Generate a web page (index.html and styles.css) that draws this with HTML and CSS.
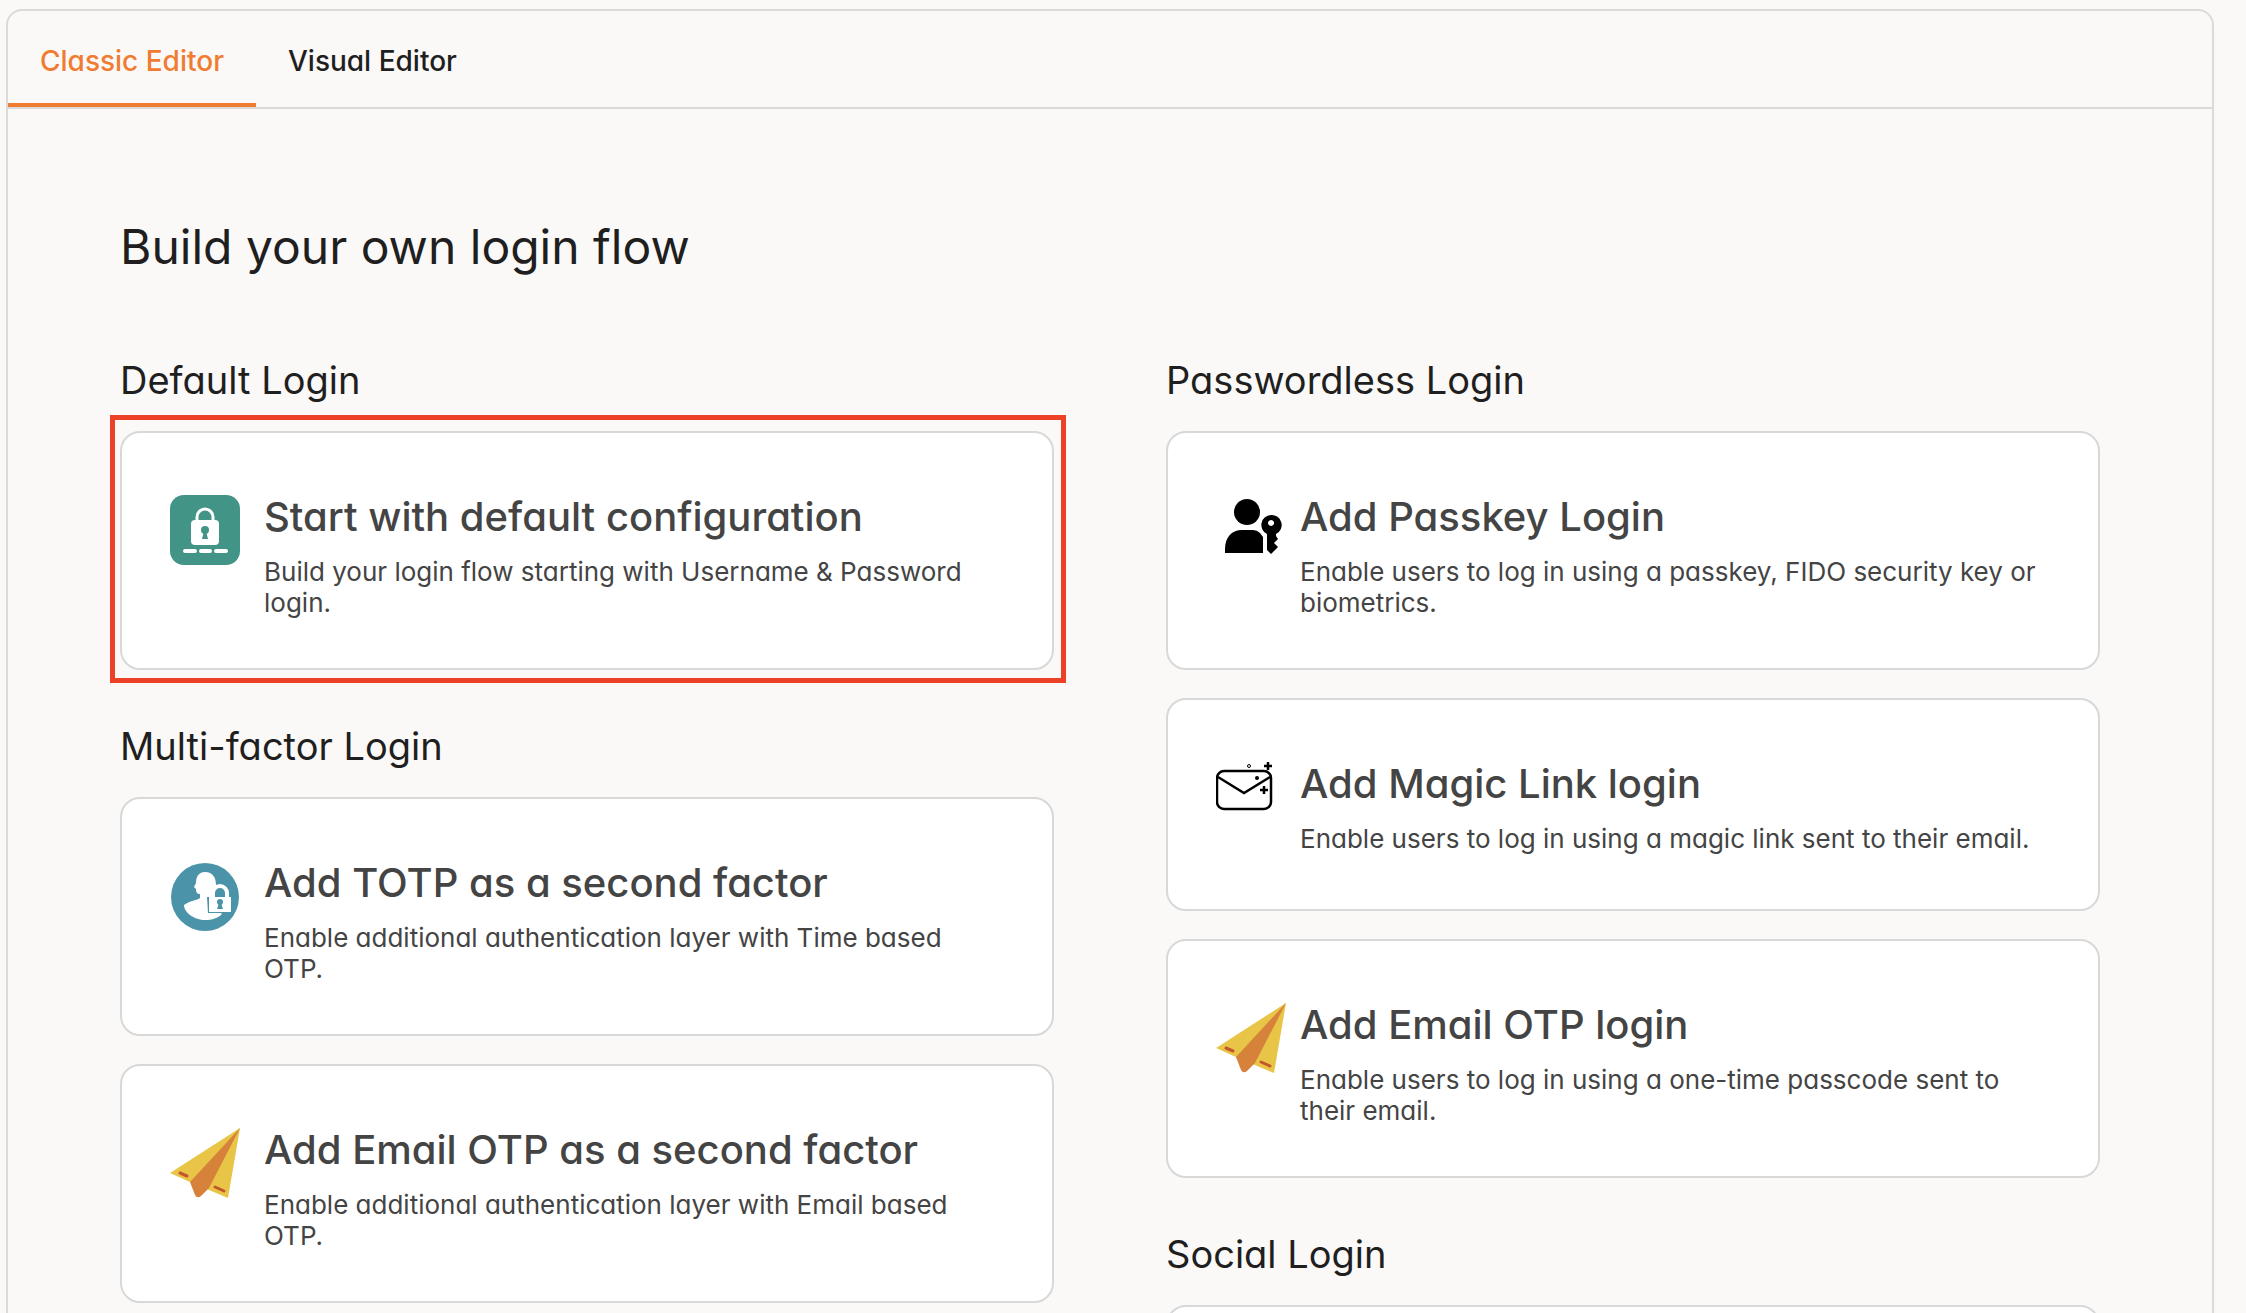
FILE: index.html
```html
<!DOCTYPE html>
<html lang="en">
<head>
<meta charset="utf-8">
<title>Login flow</title>
<link rel="stylesheet" href="styles.css">
</head>
<body>
<svg class="sprite" aria-hidden="true">
  <symbol id="plane" viewBox="0 0 70 70">
    <path d="M70 0 0 45 20 54 58 70Z" fill="#e8c547"/>
    <path d="M70 0 20 54 25 67 Q27 71 31 68L39 60Z" fill="#d6823b"/>
    <path d="M10 45 17 48M45 59 54 63" stroke="#c4562d" stroke-width="3" stroke-linecap="round"/>
  </symbol>
</svg>
<main class="panel">
  <nav class="tabs">
    <button class="tab tab-active" type="button">Classic Editor</button>
    <button class="tab" type="button">Visual Editor</button>
  </nav>
  <div class="content">
    <h1>Build your own login flow</h1>
    <div class="columns">
      <div class="column">
        <section>
          <h2>Default Login</h2>
          <div class="highlight">
            <button class="card" type="button">
              <svg class="icon" viewBox="0 0 70 70" aria-hidden="true">
                <rect width="70" height="70" rx="14" fill="#419486"/>
                <path d="M27 26V22a8 8 0 0 1 16 0v4" fill="none" stroke="#fff" stroke-width="3"/>
                <rect x="21" y="25" width="28" height="25" rx="4" fill="#fff"/>
                <circle cx="35" cy="35" r="4" fill="#419486"/>
                <path d="M34 36h2l2 8h-6Z" fill="#419486"/>
                <path d="M15 56H25M31 56H40M46 56H56" stroke="#fff" stroke-width="4" stroke-linecap="round"/>
              </svg>
              <span class="text">
                <span class="title">Start with default configuration</span>
                <span class="desc">Build your login flow starting with Username &amp; Password login.</span>
              </span>
            </button>
          </div>
        </section>
        <section>
          <h2>Multi-factor Login</h2>
          <div class="cards">
            <button class="card" type="button">
              <svg class="icon" viewBox="0 0 70 70" aria-hidden="true">
                <circle cx="35" cy="36" r="34" fill="#4b93a9"/>
                <path d="M35 11C43 11 46 17 46 24C46 30 44 34 41 38V44L52 53C48 57 42 59 35 59C25 59 14 52 14 44C19 40 28 39 30 37V33C27 33 26 31 26 28L24 26L26 22C26 15 29 11 35 11Z" fill="#fff"/>
                <path d="M37 36h5v-5a9 9 0 0 1 17 0v5h3v16H38Z" fill="#4b93a9"/>
                <path d="M43 37V32a7 7 0 0 1 14 0v5" fill="none" stroke="#fff" stroke-width="4"/>
                <path d="M39 36H61V51H39Z" fill="#fff"/>
                <circle cx="50" cy="41" r="3" fill="#4b93a9"/>
                <path d="M49 42h2l2 6h-6Z" fill="#4b93a9"/>
              </svg>
              <span class="text">
                <span class="title">Add TOTP as a second factor</span>
                <span class="desc">Enable additional authentication layer with Time based OTP.</span>
              </span>
            </button>
            <button class="card" type="button">
              <svg class="icon" aria-hidden="true"><use href="#plane"/></svg>
              <span class="text">
                <span class="title">Add Email OTP as a second factor</span>
                <span class="desc">Enable additional authentication layer with Email based OTP.</span>
              </span>
            </button>
          </div>
        </section>
      </div>
      <div class="column column-tight">
        <section>
          <h2>Passwordless Login</h2>
          <div class="cards">
            <button class="card" type="button">
              <svg class="icon" viewBox="0 0 70 70" aria-hidden="true">
                <circle cx="31" cy="17" r="13"/>
                <path d="M9 58V54C9 42 16 35 26 35H37Q41 35 44 38L47 42V58Z"/>
                <path fill-rule="evenodd" d="M55 20a10 10 0 0 1 5 19V41L62 44 58 48 62 52 55 59 51 55V39A10 10 0 0 1 55 20ZM55 25a3 3 0 1 0 .1 0Z"/>
              </svg>
              <span class="text">
                <span class="title">Add Passkey Login</span>
                <span class="desc">Enable users to log in using a passkey, FIDO security key or biometrics.</span>
              </span>
            </button>
            <button class="card" type="button">
              <svg class="icon" viewBox="0 0 70 70" fill="none" stroke="#000" stroke-width="2.500" aria-hidden="true">
                <rect x="1" y="9" width="54" height="38" rx="7"/>
                <path d="M2 15 28 31 54 15"/>
                <path d="M52 0V8M48 4H56M48 24V32M44 28H52"/>
                <circle cx="33" cy="4" r="1.500" stroke-width="1"/>
                <circle cx="41" cy="16" r="2" fill="#000" stroke="none"/>
              </svg>
              <span class="text">
                <span class="title">Add Magic Link login</span>
                <span class="desc">Enable users to log in using a magic link sent to their email.</span>
              </span>
            </button>
            <button class="card" type="button">
              <svg class="icon" aria-hidden="true"><use href="#plane"/></svg>
              <span class="text">
                <span class="title">Add Email OTP login</span>
                <span class="desc">Enable users to log in using a one-time passcode sent to their email.</span>
              </span>
            </button>
          </div>
        </section>
        <section>
          <h2>Social Login</h2>
          <div class="card"></div>
        </section>
      </div>
    </div>
  </div>
</main>
</body>
</html>
```
FILE: styles.css
```css
* {
  box-sizing: border-box;
}

body {
  margin: 0;
  height: 100vh;
  overflow: hidden;
  padding: 9px 32px 0 6px;
  background: #fbf9f8;
  color: #1f1f1f;
  font-family: Inter, "Liberation Sans", sans-serif;
  font-feature-settings: "cv11";
}

button {
  font: inherit;
  font-feature-settings: inherit;
  text-align: left;
  cursor: pointer;
}

.sprite {
  display: none;
}

.panel {
  border: 2px solid #dcdad9;
  border-radius: 16px;
}

.tabs {
  display: flex;
  border-bottom: 2px solid #dcdad9;
}

.tab {
  padding: 33px 32px 25px;
  border: 0;
  border-bottom: 4px solid transparent;
  background: none;
  color: #1f1f1f;
  font-size: 28px;
  font-weight: 500;
  line-height: 34px;
}

.tab-active {
  border-bottom-color: #f07c31;
  color: #f07c31;
}

.content {
  padding: 108px 112px;
}

h1 {
  margin: 0 0 81px;
  font-size: 48px;
  font-weight: 400;
  line-height: 60px;
}

h2 {
  margin: 0 0 29px;
  font-size: 38px;
  font-weight: 400;
  line-height: 44px;
}

.columns {
  display: grid;
  grid-template-columns: 1fr 1fr;
  gap: 112px;
}

.column {
  display: flex;
  flex-direction: column;
  gap: 54px;
}

.cards {
  display: flex;
  flex-direction: column;
  gap: 28px;
}

.card {
  display: flex;
  align-items: flex-start;
  gap: 24px;
  width: 100%;
  min-height: 213px;
  padding: 62px 48px 50px;
  border: 2px solid #d8d8d8;
  border-radius: 20px;
  background: #fff;
  color: #444;
}

.column-tight .card {
  gap: 14px;
}

.icon {
  flex: none;
  width: 70px;
  height: 70px;
}

.text {
  display: flex;
  flex-direction: column;
  gap: 17px;
}

.title {
  font-size: 40px;
  font-weight: 500;
  line-height: 44px;
}

.desc {
  font-size: 26px;
  line-height: 31px;
}

.highlight {
  position: relative;
}

.highlight::after {
  content: "";
  position: absolute;
  inset: -16px -12px -13px -10px;
  border: 5px solid #ec4127;
  pointer-events: none;
}
```
